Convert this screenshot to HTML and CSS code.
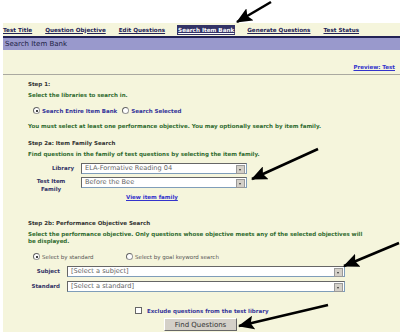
FILE: index.html
```html
<!DOCTYPE html>
<html lang="en">
<head>
    <meta charset="UTF-8">
    <title>Search Item Bank</title>
    <link rel="stylesheet" href="styles.css">
</head>
<body>
    <div class="page">
        <div class="tabs">
            <a class="tab" href="#">Test Title</a>
            <a class="tab" href="#">Question Objective</a>
            <a class="tab" href="#">Edit Questions</a>
            <a class="tab active" href="#">Search Item Bank</a>
            <a class="tab" href="#">Generate Questions</a>
            <a class="tab" href="#">Test Status</a>
        </div>
        <div class="title-bar">Search Item Bank</div>

        <div class="preview"><a href="#">Preview: Test</a></div>
        <hr class="sep">

        <div class="content">
            <div class="step s1">Step 1:</div>
            <div class="note">Select the libraries to search in.</div>
            <div class="radios">
                <label class="radio"><span class="dot checked"></span>Search Entire Item Bank</label>
                <label class="radio"><span class="dot"></span>Search Selected</label>
            </div>
            <div class="note must">You must select at least one performance objective. You may optionally search by item family.</div>

            <div class="step s2a">Step 2a: Item Family Search</div>
            <div class="note">Find questions in the family of test questions by selecting the item family.</div>
            <div class="fields fam">
                <div class="lbl">Library</div>
                <div class="select">ELA-Formative Reading 04<span class="arr"></span></div>
                <div class="lbl two">Test Item<br>Family</div>
                <div class="select">Before the Bee<span class="arr"></span></div>
            </div>
            <div class="view"><a href="#">View item family</a></div>

            <div class="step s2b">Step 2b: Performance Objective Search</div>
            <div class="note">Select the performance objective. Only questions whose objective meets any of the selected objectives will be displayed.</div>
            <div class="radios plain">
                <label class="radio r-std"><span class="dot checked"></span>Select by standard</label>
                <label class="radio"><span class="dot"></span>Select by goal keyword search</label>
            </div>
            <div class="fields obj">
                <div class="lbl">Subject</div>
                <div class="select">[Select a subject]<span class="arr"></span></div>
                <div class="lbl">Standard</div>
                <div class="select">[Select a standard]<span class="arr"></span></div>
            </div>

            <div class="exclude"><span class="box"></span>Exclude questions from the test library</div>
            <div class="actions"><button type="button">Find Questions</button></div>
        </div>
    </div>

    <!-- annotation arrows drawn over the screenshot -->
    <svg class="arrows" width="400" height="335" viewBox="0 0 400 335">
        <defs>
            <marker id="head" markerWidth="16" markerHeight="14" refX="15" refY="7" orient="auto" markerUnits="userSpaceOnUse">
                <path d="M0,0 L16,7 L0,14 L3,7 Z" fill="#000"/>
            </marker>
        </defs>
        <line x1="271" y1="2" x2="237" y2="22" stroke="#000" stroke-width="2.6" marker-end="url(#head)"/>
        <line x1="318" y1="149" x2="252" y2="179" stroke="#000" stroke-width="2.6" marker-end="url(#head)"/>
        <line x1="399" y1="243" x2="344" y2="266" stroke="#000" stroke-width="2.6" marker-end="url(#head)"/>
        <line x1="328" y1="305" x2="239" y2="326" stroke="#000" stroke-width="2.6" marker-end="url(#head)"/>
    </svg>
</body>
</html>
```

FILE: styles.css
```css
body {
    margin: 0;
    background: #fff;
    font-family: 'DejaVu Sans', Verdana, sans-serif;
    font-size: 5.5px;
    position: relative;
    width: 400px;
    height: 335px;
    overflow: hidden;
}

.page {
    margin: 23px 0 0 3px;
    background: #f5f5dc;
    height: 309px;
}

.tabs {
    display: flex;
    align-items: center;
    height: 13px;
}
.tab {
    color: #222255;
    font-weight: bold;
    font-size: 5.65px;
    margin-right: 11px;
    padding: 2px 1px;
    white-space: nowrap;
}
.tab:first-child {
    padding-left: 0;
}
.tab.active {
    background: #333366;
    color: #fff;
}

.title-bar {
    border-top: 2px solid #222255;
    background: #9999cc;
    color: #222244;
    font-size: 7px;
    height: 12px;
    line-height: 12px;
    padding-left: 2px;
}

.preview {
    text-align: right;
    padding: 14px 5px 0 0;
    height: 9px;
}
.preview a, .view a {
    color: #3333cc;
    font-weight: bold;
}

.sep {
    border: none;
    border-top: 1px solid #aaa9a0;
    margin: 1px 0 0 0;
}

.content {
    padding-left: 25px;
}

.step {
    color: #333333;
    font-weight: bold;
    margin-top: 5px;
    line-height: 8px;
}
.s1 {
    margin-top: 5px;
}
.note {
    color: #2f6b2f;
    font-weight: bold;
    margin-top: 4px;
    line-height: 7px;
    max-width: 340px;
}

.radios {
    display: flex;
    gap: 5px;
    margin: 8px 0 0 5px;
}
.radio {
    display: flex;
    align-items: center;
    color: #333399;
    font-weight: bold;
    white-space: nowrap;
}
.dot {
    width: 5px;
    height: 5px;
    border: 1px solid #999;
    border-top-color: #666;
    border-left-color: #666;
    border-radius: 50%;
    background: #fff;
    margin-right: 2px;
    position: relative;
}
.dot.checked::after {
    content: "";
    position: absolute;
    left: 1.5px;
    top: 1.5px;
    width: 2px;
    height: 2px;
    border-radius: 50%;
    background: #000;
}
.radios.plain .radio {
    color: #555;
    font-weight: normal;
}
.r-std {
    width: 88px;
}

.must {
    margin-top: 9px;
}
.s2a {
    margin-top: 9px;
}

.fields {
    display: grid;
    grid-auto-rows: 11px;
    align-items: center;
    row-gap: 3px;
    column-gap: 7px;
    margin-top: 5px;
}
.fam {
    grid-template-columns: 46px 166px;
}
.obj {
    grid-template-columns: 32px 278px;
    row-gap: 4px;
    margin-top: 6px;
}
.lbl {
    color: #333366;
    font-weight: bold;
    text-align: right;
    line-height: 7px;
}
.lbl.two {
    align-self: start;
    text-align: center;
    line-height: 8px;
    white-space: nowrap;
}
.select {
    position: relative;
    height: 9px;
    line-height: 9px;
    background: #fff;
    border: 1px solid #7f9db9;
    border-top-color: #666;
    border-left-color: #666;
    color: #666;
    font-size: 6.6px;
    padding-left: 3px;
}
.arr {
    position: absolute;
    right: 1px;
    top: 1px;
    width: 7px;
    height: 7px;
    background: #d4d0c8;
    border: 1px solid #999;
}
.arr::after {
    content: "";
    position: absolute;
    left: 2px;
    top: 3px;
    border-left: 1.5px solid transparent;
    border-right: 1.5px solid transparent;
    border-top: 2px solid #333;
}

.view {
    padding-left: 98px;
    margin-top: 6px;
}

.s2b {
    margin-top: 19px;
}

.exclude {
    display: flex;
    align-items: center;
    color: #333399;
    font-weight: bold;
    margin: 15px 0 0 107px;
}
.box {
    width: 5px;
    height: 5px;
    background: #fff;
    border: 1px solid #666;
    margin-right: 5px;
}

.actions {
    padding-left: 136px;
    margin-top: 4px;
}
button {
    font-family: 'DejaVu Sans', Verdana, sans-serif;
    font-size: 7px;
    color: #333;
    background: #d4d0c8;
    border: 1px solid #fff;
    border-right-color: #666;
    border-bottom-color: #666;
    width: 73px;
    height: 13px;
    padding: 0;
}

.arrows {
    position: absolute;
    left: 0;
    top: 0;
    pointer-events: none;
}
```
